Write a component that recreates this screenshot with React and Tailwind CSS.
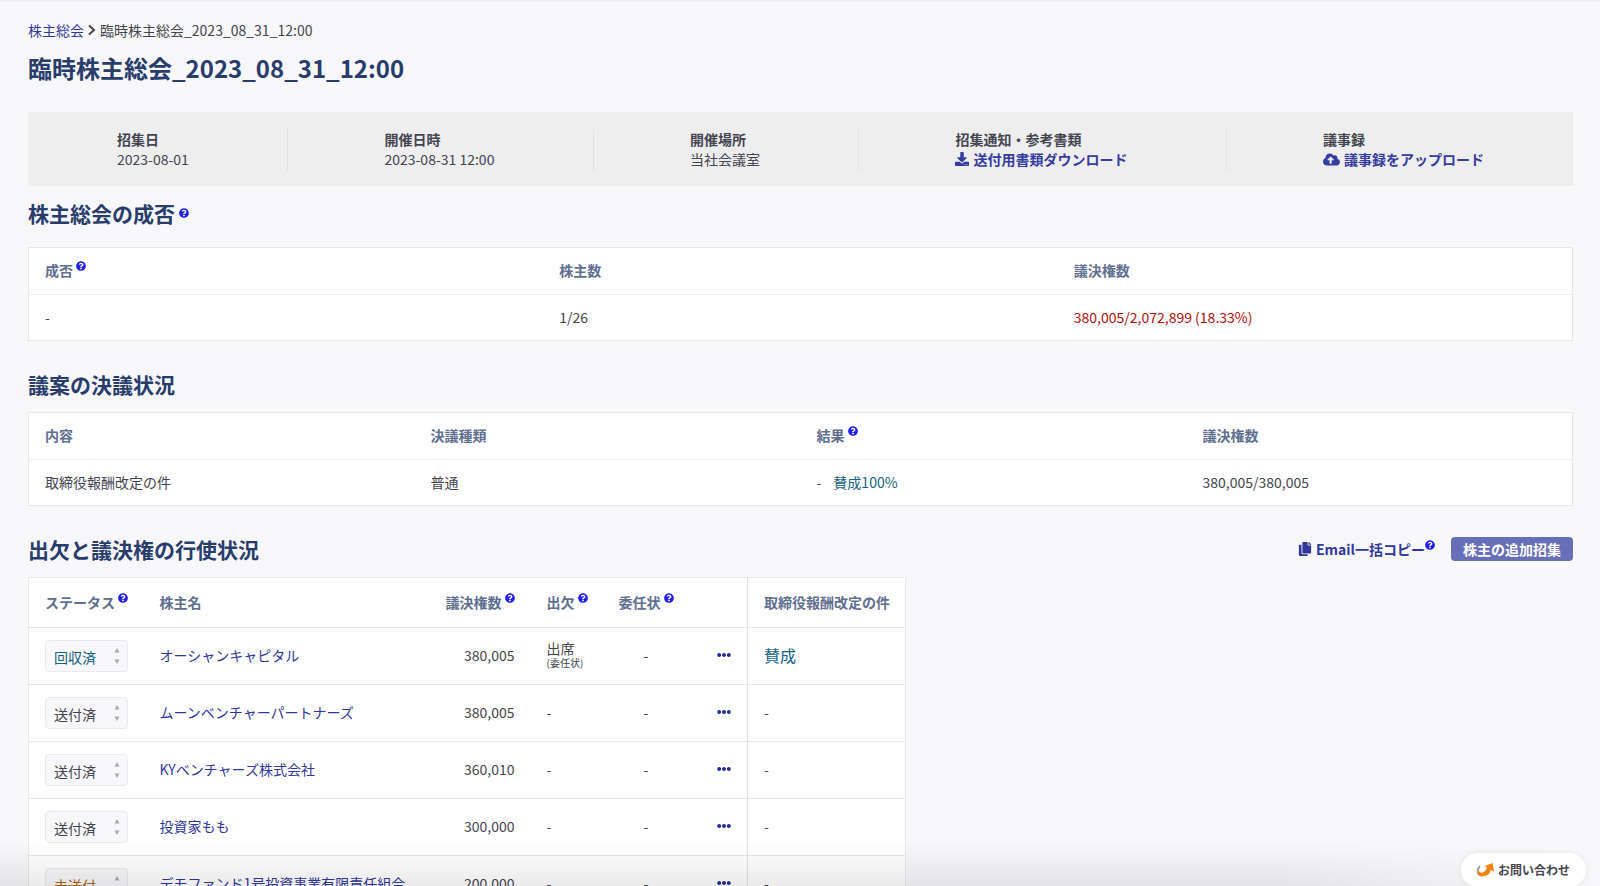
import React from 'react'
import { FaCloudUploadAlt, FaCopy, FaDownload, FaEllipsisH, FaQuestionCircle } from 'react-icons/fa'

const shareholders = [
  { id: 1, status: '回収済', name: 'オーシャンキャピタル', votes: '380,005', attend: '出席', note: '(委任状)', result: '賛成' },
  { id: 2, status: '送付済', name: 'ムーンベンチャーパートナーズ', votes: '380,005' },
  { id: 3, status: '送付済', name: 'KYベンチャーズ株式会社', votes: '360,010' },
  { id: 4, status: '送付済', name: '投資家もも', votes: '300,000' },
  { id: 5, status: '未送付', name: 'デモファンド1号投資事業有限責任組合', votes: '200,000' },
]

const statusColor = {
  回収済: 'text-[#136280]',
  送付済: 'text-[#45454f]',
  未送付: 'text-[#a8650c]',
}

function Help({ className = 'ml-[3px] -mt-3' }) {
  return (
    <button type="button" aria-label="ヘルプ" className={`inline-block align-middle text-[10px] text-[#2020ee] ${className}`}>
      <FaQuestionCircle />
    </button>
  )
}

function InfoItem({ label, children, first }) {
  return (
    <div className={`leading-5 h-[42px] ${first ? '' : 'border-l border-[#e2e2e6] pl-24'}`}>
      <dt className="font-bold">{label}</dt>
      <dd>{children}</dd>
    </div>
  )
}

function SectionTitle({ children }) {
  return <h2 className="text-[21px] leading-8 font-bold text-[#283d6b]">{children}</h2>
}

function Th({ children, className = '' }) {
  return <th scope="col" className={`px-4 pb-0.5 text-left font-bold whitespace-nowrap text-[#5f6f90] ${className}`}>{children}</th>
}

function Td({ children, className = '' }) {
  return <td className={`px-4 pb-0.5 ${className}`}>{children}</td>
}

function StatusSelect({ id, value }) {
  return (
    <div className="relative w-[83px]">
      <select
        id={`status-${id}`}
        aria-label="ステータス"
        defaultValue={value}
        className={`block h-8 w-full appearance-none rounded-sm border border-[#e8eaef] bg-[#f8f8fb] px-2 pt-px text-sm leading-5 ${statusColor[value]}`}
      >
        {Object.keys(statusColor).map(s => <option key={s}>{s}</option>)}
      </select>
      <svg viewBox="0 0 6 18" className="pointer-events-none absolute top-[7px] right-2 h-[18px] w-[6px] fill-[#a9a9ae]">
        <path d="M3 1 L5.500 5.500 H.5 Z M.5 12.500 H5.500 L3 17 Z" />
      </svg>
    </div>
  )
}

export default function App() {
  return (
    <div className="relative h-screen overflow-hidden border-t-2 border-[#f1f1f3] bg-[#f8f8fb] font-['Noto_Sans_CJK_JP',sans-serif] text-sm text-[#45454f]">
      <main className="pt-[18px] pr-[27px] pl-7">
        <nav className="flex items-center gap-1 leading-5">
          <a href="#" className="text-[#31389a]">株主総会</a>
          <svg viewBox="0 0 8 12" className="h-3 w-2 fill-none stroke-[#45454f] stroke-2">
            <path d="M1 1.500 L6 6 L1 10.500" />
          </svg>
          <span>臨時株主総会_2023_08_31_12:00</span>
        </nav>
        <h1 className="mt-[10px] text-2xl leading-9 font-bold text-[#283d6b]">臨時株主総会_2023_08_31_12:00</h1>

        <dl className="mt-[26px] flex justify-between bg-[#eeeeef] px-[89px] pt-[17px] pb-[15px]">
          <InfoItem label="招集日" first>2023-08-01</InfoItem>
          <InfoItem label="開催日時">2023-08-31 12:00</InfoItem>
          <InfoItem label="開催場所">当社会議室</InfoItem>
          <InfoItem label="招集通知・参考書類">
            <a href="#" className="flex items-center gap-1 font-bold text-[#343c9e]"><FaDownload size={14} />送付用書類ダウンロード</a>
          </InfoItem>
          <InfoItem label="議事録">
            <a href="#" className="flex items-center gap-1 font-bold text-[#343c9e]"><FaCloudUploadAlt size={17} />議事録をアップロード</a>
          </InfoItem>
        </dl>

        <section className="mt-[11px]">
          <SectionTitle>株主総会の成否<Help className="ml-1 -mt-[6px]" /></SectionTitle>
          <table className="mt-[18px] w-full table-fixed border border-[#e8e8ea] bg-white">
            <thead>
              <tr className="h-[47px] border-b border-[#eeeeef]">
                <Th>成否<Help /></Th>
                <Th>株主数</Th>
                <Th>議決権数</Th>
              </tr>
            </thead>
            <tbody>
              <tr className="h-[46px]">
                <Td>-</Td>
                <Td>1/26</Td>
                <Td className="text-[#b00d0d]">380,005/2,072,899 (18.33%)</Td>
              </tr>
            </tbody>
          </table>
        </section>

        <section className="mt-[27px]">
          <SectionTitle>議案の決議状況</SectionTitle>
          <table className="mt-3 w-full table-fixed border border-[#e8e8ea] bg-white">
            <thead>
              <tr className="h-[47px] border-b border-[#eeeeef]">
                <Th>内容</Th>
                <Th>決議種類</Th>
                <Th>結果<Help /></Th>
                <Th>議決権数</Th>
              </tr>
            </thead>
            <tbody>
              <tr className="h-[46px]">
                <Td>取締役報酬改定の件</Td>
                <Td>普通</Td>
                <Td>-<span className="ml-3 text-[#136280]">賛成100%</span></Td>
                <Td>380,005/380,005</Td>
              </tr>
            </tbody>
          </table>
        </section>

        <section className="mt-[27px]">
          <div className="flex items-center justify-between">
            <SectionTitle>出欠と議決権の行使状況</SectionTitle>
            <div className="flex items-center gap-4">
              <div className="flex items-center">
                <button type="button" className="flex items-center gap-1 font-bold text-[#31389a]"><FaCopy size={14} />Email一括コピー</button>
                <Help className="-mt-2" />
              </div>
              <button type="button" className="h-6 rounded-sm bg-[#686fb9] px-3 leading-6 font-bold text-white">株主の追加招集</button>
            </div>
          </div>
          <table className="mt-3 w-[878px] table-fixed border border-[#e8e8ea] bg-white">
            <colgroup>
              <col className="w-[115px]" />
              <col />
              <col className="w-[101px]" />
              <col className="w-[72px]" />
              <col className="w-[87px]" />
              <col className="w-[58px]" />
              <col className="w-[158px]" />
            </colgroup>
            <thead>
              <tr className="h-[50px] border-b border-[#e8e8ea]">
                <Th>ステータス<Help /></Th>
                <Th>株主名</Th>
                <Th>議決権数<Help /></Th>
                <Th>出欠<Help /></Th>
                <Th>委任状<Help /></Th>
                <Th />
                <Th className="border-l border-[#e2e2e6]">取締役報酬改定の件</Th>
              </tr>
            </thead>
            <tbody>
              {shareholders.map(s => (
                <tr key={s.id} className="h-[57px] border-b border-[#e8e8ea]">
                  <td className="px-4"><StatusSelect id={s.id} value={s.status} /></td>
                  <Td><a href="#" className="whitespace-nowrap text-[#31389a]">{s.name}</a></Td>
                  <Td className="text-right">{s.votes}</Td>
                  <Td className="whitespace-nowrap">
                    {s.attend ? <><div className="leading-4">{s.attend}</div><div className="text-[10px] leading-[14px]">{s.note}</div></> : '-'}
                  </Td>
                  <Td className="text-center">-</Td>
                  <Td className="text-right">
                    <button type="button" aria-label="操作メニュー" className="-mt-1 align-middle text-[#232f92]"><FaEllipsisH size={14} /></button>
                  </Td>
                  <Td className="border-l border-[#e2e2e6]">
                    {s.result ? <span className="text-base text-[#136280]">{s.result}</span> : '-'}
                  </Td>
                </tr>
              ))}
            </tbody>
          </table>
        </section>
      </main>

      {/* bottom shade, fades out toward the contact button */}
      <div className="pointer-events-none absolute inset-x-0 bottom-0 h-11 bg-linear-to-t from-black/8 to-transparent mask-r-from-80%" />
      <button type="button" className="absolute right-[14px] -bottom-px flex h-[34px] items-center gap-1 rounded-full bg-white pr-4 pl-[15px] text-xs font-bold text-[#45454f] shadow-[0_0_6px_rgba(0,0,0,0.08)]">
        <svg viewBox="0 0 18 14" className="h-[14px] w-[18px]">
          <path d="M4 3 C0 7 1 12 6 13" fill="none" stroke="#8a8a90" strokeWidth="1.500" />
          <path d="M1 6 C1 12 5 14 9 13 C13 12 14 9 15 7 L18 8.500 L16.500 0 L8.500 3 L11 4.500 C10 8 7 10.500 4.500 9.500 C2.500 8.500 2 7.500 1 6 Z" fill="#f5820b" />
        </svg>
        お問い合わせ
      </button>
    </div>
  )
}
